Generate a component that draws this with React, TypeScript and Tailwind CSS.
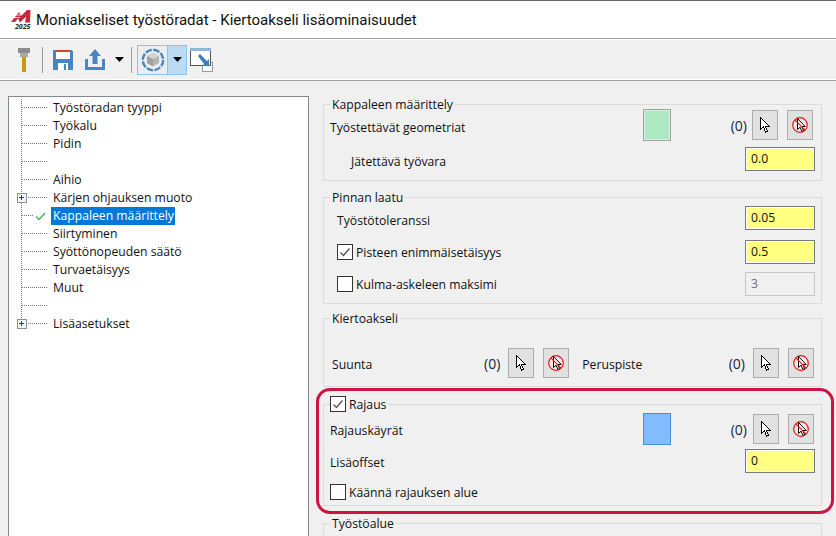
const font = "font-['Open_Sans','Noto_Sans',sans-serif]";

const treeItems = [
  { label: "Työstöradan tyyppi" },
  { label: "Työkalu" },
  { label: "Pidin" },
  { label: "" },
  { label: "Aihio" },
  { label: "Kärjen ohjauksen muoto", plus: true },
  { label: "Kappaleen määrittely", check: true, selected: true },
  { label: "Siirtyminen" },
  { label: "Syöttönopeuden säätö" },
  { label: "Turvaetäisyys" },
  { label: "Muut" },
  { label: "" },
  { label: "Lisäasetukset", plus: true, last: true },
];

function TreeGutter({ plus, check, last }: { plus?: boolean; check?: boolean; last?: boolean }) {
  return (
    <svg width="42" height="18" className="shrink-0" shapeRendering="crispEdges">
      <line x1="12.5" y1="0" x2="12.5" y2={last ? 9 : 18} stroke="#777" strokeDasharray="1 1" />
      <line x1="13" y1="8.5" x2={check ? 24 : 39} y2="8.5" stroke="#777" strokeDasharray="1 1" />
      {plus && (
        <g>
          <rect x="8.5" y="4.5" width="9" height="9" fill="#f4f4f4" stroke="#8a8f98" />
          <path d="M10 9h5M12.500 6.500v5" stroke="#1f3f88" transform="translate(0 -0.5)" />
        </g>
      )}
      {check && (
        <path d="M27 9.500l3 3 6-6.500" fill="none" stroke="#3fb950" strokeWidth="1.3" shapeRendering="auto" />
      )}
    </svg>
  );
}

function Tree() {
  return (
    <div className="w-[301px] h-[441px] mt-[15px] ml-2 shrink-0 border border-[#828790] bg-white pt-[2px]">
      {treeItems.map((item, i) => (
        <div key={i} className="flex h-[18px] items-center text-[12.2px] leading-[18px] text-[#111]">
          <TreeGutter plus={item.plus} check={item.check} last={item.last} />
          {item.label && (
            <span className={item.selected ? "bg-[#0078d7] text-white pl-[2px] pr-[1px] w-[124px]" : "pl-[2px]"}>
              {item.label}
            </span>
          )}
        </div>
      ))}
    </div>
  );
}

function Arrow() {
  return (
    <svg width="14" height="18" viewBox="0 0 14 18" shapeRendering="crispEdges">
      <path d="M2.500 1.500v12l3-2.500 2 5 2-1-2-4.500h4z" fill="#fff" stroke="#000" strokeLinejoin="miter" />
    </svg>
  );
}

function PickButton() {
  return (
    <div className="w-[26px] h-[30px] shrink-0 border border-[#adadad] bg-[#e1e1e1] flex items-center justify-center">
      <Arrow />
    </div>
  );
}

function ClearButton() {
  return (
    <div className="w-[26px] h-[30px] shrink-0 border border-[#adadad] bg-[#e1e1e1] flex items-center justify-center">
      <svg width="18" height="18" viewBox="0 0 18 18">
        <circle cx="9" cy="9" r="7.300" fill="#f7e9e9" stroke="#ee1111" strokeWidth="1.2" />
        <path d="M6.500 2.500v11l2.600-2.300 1.800 4.300 1.700-.9-1.800-4.100h3.400z" fill="#fff" stroke="#000" />
        <path d="M3.800 3.800l10.400 10.400" stroke="#ee1111" strokeWidth="1.2" />
      </svg>
    </div>
  );
}

function Picker({ gap = "mr-[8px]" }: { gap?: string }) {
  return (
    <div className="flex items-center">
      <span className={`${gap} text-[14px] text-[#1b2440] whitespace-nowrap`}>(0)</span>
      <PickButton />
      <div className="w-[9px]" />
      <ClearButton />
    </div>
  );
}

function YellowInput({ value }: { value: string }) {
  return (
    <div className="w-[70px] h-[24px] shrink-0 border border-[#7a7a7a] bg-white p-[1px]">
      <div className="h-full bg-[#ffff80] pl-[4px] text-[12.2px] leading-[20px] text-[#111]">{value}</div>
    </div>
  );
}

function Check({ checked }: { checked?: boolean }) {
  return (
    <div className="w-[16px] h-[16px] shrink-0 border border-[#333] bg-white flex items-center justify-center">
      {checked && (
        <svg width="14" height="14" viewBox="0 0 14 14">
          <path d="M2.500 7.500l3 3 6-7" fill="none" stroke="#555" strokeWidth="1.4" />
        </svg>
      )}
    </div>
  );
}

function Group({ title, titleNode, className, children }: { title?: string; titleNode?: React.ReactNode; className?: string; children?: React.ReactNode }) {
  return (
    <fieldset className={`border border-[#dcdcdc] w-[499px] ${className ?? ""}`}>
      <legend className="ml-[6px] px-[2px] text-[12.2px] leading-[16px] text-[#111]">
        {titleNode ?? <span className="block translate-y-[1px]">{title}</span>}
      </legend>
      {children}
    </fieldset>
  );
}

function Toolbar() {
  return (
    <div className="h-[39px] bg-[#f0f0f0] flex items-center pl-[18px]">
      {/* tool */}
      <svg width="12" height="24" viewBox="0 0 12 24" shapeRendering="crispEdges">
        <rect x="0" y="0" width="12" height="5" fill="#8c8c8c" />
        <rect x="2" y="5" width="8" height="4" fill="#a8a8a8" />
        <rect x="4" y="9" width="4" height="15" fill="#cc9a10" />
      </svg>
      <div className="w-px h-[26px] bg-[#9a9a9a] ml-[12px] mr-[10px]" />
      {/* save */}
      <svg width="20" height="20" viewBox="0 0 20 20" shapeRendering="crispEdges">
        <path d="M0 0h18l2 2v18H0z" fill="#4b84bd" />
        <rect x="3" y="0" width="14" height="2" fill="#d9402c" />
        <rect x="3" y="2" width="14" height="7" fill="#fff" />
        <rect x="5" y="13" width="10" height="7" fill="#fff" />
        <rect x="11" y="14" width="2" height="6" fill="#4b84bd" />
      </svg>
      {/* export */}
      <svg width="20" height="21" viewBox="0 0 20 21" className="ml-[12px]" shapeRendering="crispEdges">
        <path d="M10 0l6 7h-3.500v8h-5V7H4z" fill="#4a86bf" shapeRendering="auto" />
        <path d="M0 10h3v8h14v-8h3v11H0z" fill="#4a86bf" />
      </svg>
      <svg width="9" height="5" viewBox="0 0 9 5" className="ml-[10px]">
        <path d="M0 0h9L4.500 5z" fill="#000" />
      </svg>
      <div className="w-px h-[26px] bg-[#9a9a9a] ml-[7px] mr-[5px]" />
      {/* view toggle */}
      <div className="flex h-[30px] border border-[#8cc4ef] bg-[#cce4f7]">
        <div className="w-[30px] bg-[#e8eef2] flex items-center justify-center border-r border-[#8cc4ef]">
          <svg width="24" height="24" viewBox="0 0 24 24">
            <circle cx="12" cy="12" r="10.200" fill="none" stroke="#4b84bd" strokeWidth="2.400" strokeDasharray="6.500 1.500" />
            <path d="M12 5l6 3v7l-6 3.500L6 15V8z" fill="#b4b4b4" />
            <path d="M12 5l6 3-6 3-6-3z" fill="#d4d4d4" />
            <path d="M12 11v7.500L6 15V8z" fill="#a0a0a0" />
          </svg>
        </div>
        <div className="w-[18px] bg-[#bcdcf4] flex items-center justify-center">
          <svg width="9" height="5" viewBox="0 0 9 5">
            <path d="M0 0h9L4.500 5z" fill="#000" />
          </svg>
        </div>
      </div>
      {/* window */}
      <svg width="24" height="24" viewBox="0 0 24 24" className="ml-[3px]" shapeRendering="crispEdges">
        <rect x="12.500" y="14.500" width="10" height="9" fill="#f7f7f7" stroke="#9a9a9a" />
        <rect x="0.500" y="0.500" width="20" height="17" fill="#fff" stroke="#555" />
        <rect x="0" y="0" width="21" height="3" fill="#8cb6de" />
        <path d="M8 8l2-2 7 7 2-2v7h-7l2-2z" fill="#3d7fbe" shapeRendering="auto" />
      </svg>
    </div>
  );
}

function TitleBar() {
  return (
    <div className="h-[38px] bg-white flex items-center pl-[11px] border-t border-[#666]">
      <div className="relative w-[20px] h-[20px] shrink-0">
        <svg width="20" height="13" viewBox="0 0 20 13" className="block">
          <path d="M0 12L8 2l2 4 6-6h3.500L19 12.500h-5l1-6-6 6-2-4-3 3.500z" fill="#c8283c" />
          <path d="M1 7h8v1H1zM3 4.500h6v1H3z" fill="#fff" opacity="0.8" />
        </svg>
        <span className="absolute left-[4px] top-[13px] text-[7px] leading-[7px] font-bold italic text-[#222]">2025</span>
      </div>
      <span className="ml-[5px] translate-y-[1px] text-[15px] font-['Roboto',sans-serif] text-[#111] whitespace-nowrap">Moniakseliset työstöradat - Kiertoakseli lisäominaisuudet</span>
    </div>
  );
}

function Form() {
  return (
    <div className="ml-[14px] flex flex-col pt-[15px]">
      <Group title="Kappaleen määrittely" className="h-[85px]">
        <div className="flex items-center h-[32px] -mt-[3px] pl-[6px] pr-[8px] text-[12.2px] text-[#111]">
          <span className="w-[313px] translate-y-[3px]">Työstettävät geometriat</span>
          <div className="w-[28px] h-[32px] border border-[#a0a0a0] bg-[#ade8c2] ring-1 ring-inset ring-[#d8f0e0]" />
          <div className="ml-auto"><Picker gap="mr-[5px]" /></div>
        </div>
        <div className="flex items-center h-[24px] mt-[6px] pl-[27px] pr-[6px] text-[12.2px] text-[#111]">
          <span className="translate-y-[3px]">Jätettävä työvara</span>
          <div className="ml-auto"><YellowInput value="0.0" /></div>
        </div>
      </Group>

      <Group title="Pinnan laatu" className="h-[115px] mt-[8px]">
        <div className="flex flex-col gap-[10px] pl-[13px] pr-[6px] text-[12.2px] text-[#111] mt-[1px]">
          <div className="flex items-center h-[24px]">
            <span className="translate-y-[3px]">Työstötoleranssi</span>
            <div className="ml-auto"><YellowInput value="0.05" /></div>
          </div>
          <div className="flex items-center h-[24px]">
            <Check checked />
            <span className="ml-[3px] translate-y-[1px]">Pisteen enimmäisetäisyys</span>
            <div className="ml-auto"><YellowInput value="0.5" /></div>
          </div>
          <div className="flex items-center h-[24px] -mt-[2px]">
            <Check />
            <span className="ml-[3px] translate-y-[1px]">Kulma-askeleen maksimi</span>
            <div className="ml-auto w-[70px] h-[24px] border border-[#c8c8c8] bg-[#f0f0f0] pl-[5px] leading-[22px] text-[#5a6f90]">3</div>
          </div>
        </div>
      </Group>

      <Group title="Kiertoakseli" className="h-[77px] mt-[6px]">
        <div className="flex items-center h-[30px] mt-[22px] pl-[8px] pr-[7px] text-[12.2px] text-[#111]">
          <span className="w-[152px] translate-y-[2px]">Suunta</span>
          <Picker />
          <span className="ml-[13px] translate-y-[2px]">Peruspiste</span>
          <div className="ml-auto"><Picker /></div>
        </div>
      </Group>

      <Group
        titleNode={
          <span className="flex items-center -ml-[2px]">
            <Check checked />
            <span className="ml-[3px] translate-y-[1px]">Rajaus</span>
          </span>
        }
        className="h-[110px] mt-[9px]"
      >
        <div className="flex items-center h-[32px] mt-[1px] pl-[6px] pr-[7px] text-[12.2px] text-[#111]">
          <span className="w-[313px] translate-y-[2px]">Rajauskäyrät</span>
          <div className="w-[28px] h-[32px] border border-[#4a90d9] bg-[#80bcff]" />
          <div className="ml-auto"><Picker gap="mr-[6px]" /></div>
        </div>
        <div className="flex items-center h-[24px] mt-[4px] pl-[6px] pr-[6px] text-[12.2px] text-[#111]">
          <span className="translate-y-[2px]">Lisäoffset</span>
          <div className="ml-auto"><YellowInput value="0" /></div>
        </div>
        <div className="flex items-center mt-[10px] pl-[6px] text-[12.2px] text-[#111]">
          <Check />
          <span className="ml-[3px] translate-y-[1px]">Käännä rajauksen alue</span>
        </div>
      </Group>

      <Group title="Työstöalue" className="h-[40px] mt-[9px]" />
    </div>
  );
}

export default function App() {
  return (
    <div className={`relative w-[836px] h-[536px] overflow-hidden bg-[#f0f0f0] ${font}`}>
      <TitleBar />
      <div className="h-px bg-[#a0a0a0]" />
      <div className="h-px bg-white" />
      <Toolbar />
      <div className="h-px bg-white" />
      <div className="h-px bg-[#a0a0a0]" />
      <div className="flex">
        <Tree />
        <Form />
      </div>
      <div className="absolute left-[316px] top-[388px] w-[518px] h-[126px] rounded-[14px] border-[3px] border-[#cf1444]" />
    </div>
  );
}
